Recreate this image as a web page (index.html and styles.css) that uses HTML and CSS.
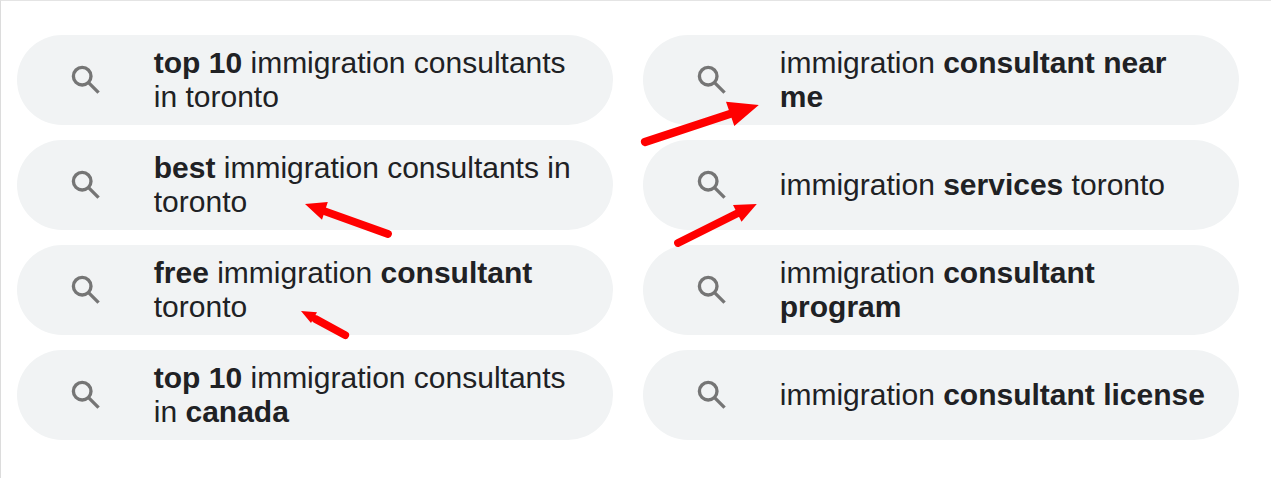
FILE: index.html
```html
<!DOCTYPE html>
<html lang="en">
<head>
<meta charset="utf-8">
<title>Related searches</title>
<link rel="stylesheet" href="styles.css">
</head>
<body>
<svg class="defs" width="0" height="0"><symbol id="search" viewBox="0 0 24 24"><circle cx="9.5" cy="9.5" r="5.5"/><path d="M13.5 13.5L19.75 19.75"/></symbol></svg>
<main class="panel">
  <div class="grid">
    <a class="pill"><svg class="icon"><use href="#search"/></svg><span class="label"><b>top 10</b> immigration consultants<br>in toronto</span></a>
    <a class="pill"><svg class="icon"><use href="#search"/></svg><span class="label">immigration <b>consultant near<br>me</b></span></a>
    <a class="pill"><svg class="icon"><use href="#search"/></svg><span class="label"><b>best</b> immigration consultants in<br>toronto</span></a>
    <a class="pill"><svg class="icon"><use href="#search"/></svg><span class="label">immigration <b>services</b> toronto</span></a>
    <a class="pill"><svg class="icon"><use href="#search"/></svg><span class="label"><b>free</b> immigration <b>consultant</b><br>toronto</span></a>
    <a class="pill"><svg class="icon"><use href="#search"/></svg><span class="label">immigration <b>consultant<br>program</b></span></a>
    <a class="pill"><svg class="icon"><use href="#search"/></svg><span class="label"><b>top 10</b> immigration consultants<br>in <b>canada</b></span></a>
    <a class="pill"><svg class="icon"><use href="#search"/></svg><span class="label">immigration <b>consultant license</b></span></a>
  </div>
  <svg class="arrows" viewBox="0 0 1271 478">
    <path class="shaft" d="M388 234L325 211.3M345.2 335.2L315.5 319M678 243L738 213"/>
    <path class="shaft wide" d="M645 142L731 113.7"/>
    <path class="head" d="M305 204L327.8 202L322 219.7zM301 311L317 312.3L311 323zM758.8 105L726 101.8L734.3 126zM756.8 204L733 205L741.5 221.8z"/>
  </svg>
</main>
</body>
</html>
```
FILE: styles.css
```css
* { box-sizing: border-box; }
body { margin: 0; background: #fff; font-family: "Liberation Sans", Arial, sans-serif; }
.defs { position: absolute; }
.panel {
  position: relative;
  width: 1271px;
  height: 478px;
  padding: 34px 0 0 16px;
  border-top: 1px solid #e4e4e4;
  border-left: 1px solid #dcdcdc;
  overflow: hidden;
}
.grid {
  display: grid;
  grid-template-columns: 596px 596px;
  grid-auto-rows: 90px;
  gap: 15px 30px;
}
.pill {
  display: flex;
  align-items: center;
  padding-left: 50px;
  border-radius: 45px;
  background: #f1f3f4;
}
.icon {
  width: 38.4px;
  height: 38.4px;
  flex: none;
  fill: none;
  stroke: #757575;
  stroke-width: 2.1;
}
.label {
  margin-left: 48.4px;
  font-size: 30px;
  line-height: 34px;
  white-space: nowrap;
  color: #202124;
}
.arrows {
  position: absolute;
  top: -1px;
  left: -1px;
  width: 1271px;
  height: 478px;
}
.shaft { fill: none; stroke: #f00; stroke-width: 7.8; stroke-linecap: round; }
.wide { stroke-width: 8.2; }
.head { fill: #f00; }
```
